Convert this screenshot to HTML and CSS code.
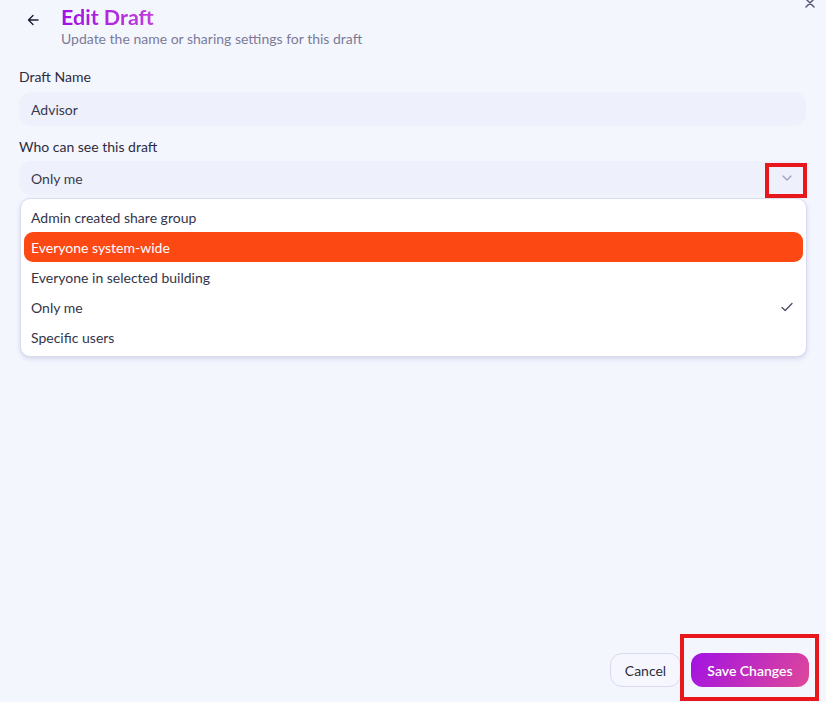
FILE: index.html
```html
<!DOCTYPE html>
<html lang="en">

<head>
    <meta charset="UTF-8">
    <meta name="viewport" content="width=device-width, initial-scale=1.0">
    <title>Edit Draft</title>
    <link rel="stylesheet" href="styles.css">
</head>

<body>
    <div class="dialog">
        <button class="close-btn" aria-label="Close">
            <svg width="10" height="10" viewBox="0 0 10 10"><path d="M1 1L9 9M9 1L1 9" stroke="#5a5a78" stroke-width="1.5" fill="none" stroke-linecap="round"/></svg>
        </button>

        <div class="header">
            <button class="back-btn" aria-label="Back">
                <svg width="12" height="12" viewBox="0 0 12 12"><path d="M11 6H1.5M6 1.5L1.5 6L6 10.5" stroke="#1e1e30" stroke-width="1.4" fill="none" stroke-linecap="round" stroke-linejoin="round"/></svg>
            </button>
            <div>
                <h1 class="title">Edit Draft</h1>
                <p class="subtitle">Update the name or sharing settings for this draft</p>
            </div>
        </div>

        <label class="label label-first">Draft Name</label>
        <div class="input">Advisor</div>

        <label class="label">Who can see this draft</label>
        <div class="select">
            <span>Only me</span>
            <span class="chevron">
                <svg width="10" height="6" viewBox="0 0 10 6"><path d="M1 1L5 5L9 1" stroke="#9c9cbc" stroke-width="1.2" fill="none" stroke-linecap="round" stroke-linejoin="round"/></svg>
            </span>
            <span class="mark mark-chevron"></span>
        </div>

        <ul class="menu">
            <li class="option">Admin created share group</li>
            <li class="option active">Everyone system-wide</li>
            <li class="option">Everyone in selected building</li>
            <li class="option">Only me
                <svg width="12" height="10" viewBox="0 0 12 10"><path d="M1 5.5L4.2 8.5L11 1.5" stroke="#4a4a68" stroke-width="1.3" fill="none" stroke-linecap="round" stroke-linejoin="round"/></svg>
            </li>
            <li class="option">Specific users</li>
        </ul>

        <div class="footer">
            <button class="btn btn-cancel">Cancel</button>
            <button class="btn btn-save">Save Changes</button>
            <span class="mark mark-save"></span>
        </div>
    </div>
</body>

</html>
```

FILE: styles.css
```css
body {
    margin: 0;
    background-color: #f4f6fe;
    font-family: 'Lato', 'Noto Sans', sans-serif;
    color: #2c2c3e;
}
.dialog {
    position: relative;
    height: 702px;
    padding: 0 20px 0 19px;
    box-sizing: border-box;
    display: flex;
    flex-direction: column;
    overflow: hidden;
}
.close-btn {
    position: absolute;
    top: -3px;
    right: 9px;
    background: none;
    border: none;
    padding: 0;
    width: 14px;
    height: 12px;
    display: flex;
    align-items: center;
    justify-content: center;
}
.header {
    display: flex;
    align-items: flex-start;
    padding-left: 7px;
}
.back-btn {
    background: none;
    border: none;
    padding: 0;
    width: 14px;
    height: 14px;
    margin-top: 13px;
    margin-right: 21px;
    display: flex;
    align-items: center;
    justify-content: center;
}
.title {
    margin: 4px 0 0;
    font-size: 21.5px;
    line-height: 26px;
    font-weight: 700;
    background: linear-gradient(90deg, #9f12e2, #c13ed9);
    -webkit-background-clip: text;
    background-clip: text;
    color: transparent;
    display: inline-block;
}
.subtitle {
    margin: 0;
    font-size: 14px;
    line-height: 18px;
    color: #7b7b98;
}
.label {
    display: block;
    font-size: 14px;
    line-height: 18px;
    margin-top: 12px;
    margin-bottom: 5px;
    color: #2c2c3e;
}
.label-first {
    margin-top: 20px;
    margin-bottom: 6px;
}
.input,
.select {
    height: 34px;
    border-radius: 12px;
    background-color: #eef0fc;
    padding: 0 12px;
    display: flex;
    align-items: center;
    font-size: 14px;
    color: #3a3a4e;
}
.select {
    position: relative;
    justify-content: space-between;
    padding-right: 14px;
}
.chevron {
    display: flex;
}
.mark {
    position: absolute;
    border: 4px solid #e8171c;
    box-sizing: border-box;
    pointer-events: none;
}
.mark-chevron {
    right: -1px;
    top: 2px;
    width: 42px;
    height: 35px;
}
.menu {
    list-style: none;
    margin: 3px -1px 0 1px;
    padding: 3px 3px 4px;
    background-color: #fff;
    border: 1px solid #d9dbef;
    border-radius: 10px;
    box-shadow: 0 2px 4px rgba(120, 120, 180, 0.25);
}
.option {
    height: 30px;
    padding: 0 10px 0 7px;
    display: flex;
    align-items: center;
    justify-content: space-between;
    font-size: 14px;
    color: #34344a;
    border-radius: 9px;
}
.option.active {
    background-color: #fc4914;
    color: #fff;
}
.footer {
    position: relative;
    margin-top: auto;
    display: flex;
    justify-content: flex-end;
    gap: 10px;
    padding-bottom: 15px;
    margin-right: -3px;
}
.btn {
    height: 34px;
    border-radius: 12px;
    font-family: 'Lato', 'Noto Sans', sans-serif;
    font-size: 14px;
    cursor: pointer;
}
.btn-cancel {
    width: 71px;
    background-color: #f6f7fe;
    border: 1px solid #d7daf0;
    color: #2c2c3e;
}
.btn-save {
    width: 118px;
    border: none;
    color: #fff;
    font-weight: 600;
    background: linear-gradient(120deg, #a112e3, #df4899);
}
.mark-save {
    right: -10px;
    top: -19px;
    width: 139px;
    height: 67px;
}
```
